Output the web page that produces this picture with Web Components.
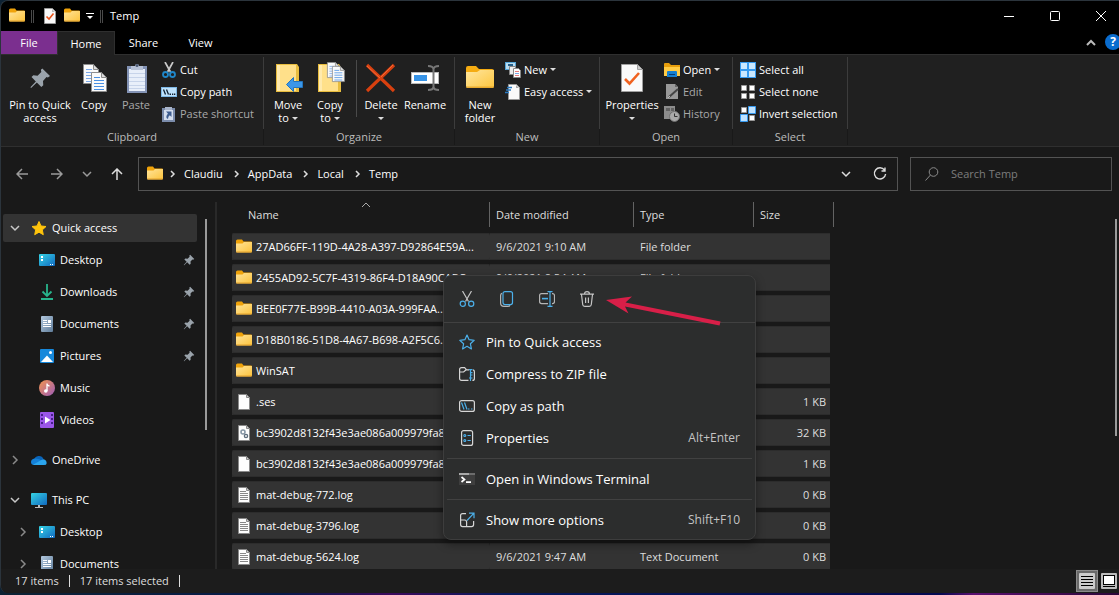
<!DOCTYPE html>
<html lang="en">
<head>
<meta charset="utf-8">
<meta name="viewport" content="width=device-width, initial-scale=1">
<title>Temp</title>
<style>
html, body { margin: 0; height: 100%; background: #0b1030; }
body { font: 11px/14px "Open Sans", "Noto Sans", sans-serif; color: #fff; overflow: hidden; }
</style>
</head>
<body>
<explorer-window></explorer-window>
<script>
const folder = '<path fill="#f0a30a" d="M0 2Q0 .5 1.500.5h4.500l1.500 2H15q1 0 1 1V8H0z"/><path fill="url(#fg)" d="M0 4.500h6.500L8 3h8V12.500q0 1-1 1H1q-1 0-1-1z"/><path fill="#e2a02c" d="M0 12.500h16q0 1-1 1H1q-1 0-1-1z"/><defs><linearGradient id="fg" x1="0" y1="0" x2="1" y2="1"><stop stop-color="#ffe49a"/><stop offset="1" stop-color="#fcc33c"/></linearGradient></defs>';
const sheet = '<path fill="#fdfdfd" stroke="#8a8a8a" d="M2.500.5h8l3 3v12h-11z"/><path fill="#ccc" stroke="#8a8a8a" d="M10.500.5v3h3z"/>';
const pin = '<path fill="#9aa3ab" d="M9.500 1 15 6.500l-1.500 1-1-.3L10 10l.2 3-1.400 1.300L5.600 11 1.500 15 1 14.500 4.900 10.400 1.800 7.200 3.100 5.900l3 .3L8.800 3.500 8.500 2z"/>';
const desktop = '<defs><linearGradient id="dg" x1="0" y1="0" x2="1" y2="1"><stop stop-color="#35d3e4"/><stop offset="1" stop-color="#1169c0"/></linearGradient></defs><rect y="2" width="16" height="12" rx="1" fill="url(#dg)"/><path fill="#fff" d="M2 4h2v2H2zM2 7h2v2H2zM11 12h1v1h-1zM13 12h1v1h-1z"/>';
const docLines = (x, y, c) => `<path fill="#fafafa" stroke="#8d8d8d" d="M${x+.5} ${y+.5}h10l5 5v14h-15z"/><path fill="#ddd" stroke="#8d8d8d" d="M${x+10.5} ${y+.5}v5h5z"/><path stroke="${c}" d="M${x+3} ${y+5.5}h6M${x+3} ${y+8.5}h10M${x+3} ${y+11.5}h10M${x+3} ${y+14.5}h10M${x+3} ${y+17.5}h10"/>`;
const bigFolder = '<path fill="#e8bd3f" d="M4 2h21l2 3v25H4z"/><path fill="#ffe08a" d="M5 3h19v26H5z"/><path fill="#ffeaae" d="M5 3h3v26H5z"/>';

const ICONS = {
  folder: [16, folder],
  pin: [16, pin],
  props: [16, '<path fill="#f8f8f8" stroke="#999" d="M2.500.5h8l3 3v12h-11z"/><path fill="#bbb" d="M10 1v3h3z"/><path fill="none" stroke="#e8541c" stroke-width="1.600" d="m4.500 8.500 2.500 2.500 4.500-5.500"/>'],
  customize: [8, '<path stroke="#fff" d="M0 1.500h8"/><path fill="#fff" d="M1 4h6L4 7z"/>'],
  caret: [6, '<path fill="#ddd" d="M0 1h6L3 4z"/>'],
  copyBig: [32, docLines(5, 2, '#7aa7e8') + docLines(13, 10, '#4a90e2')],
  pasteBig: [32, '<g transform="translate(1 1)"><path fill="#8393b5" d="M6 3h20v27H6z"/><path fill="#e8effa" d="M8 6h16v22H8z"/><path stroke="#c7d4ea" d="M8 10.500h16M8 14.500h16M8 18.500h16M8 22.500h16M8 25.500h16"/><path fill="#b6c1d6" d="M10 3h4q0-2 2-2t2 2h4v4H10z"/><circle cx="16" cy="2.500" r="1.500" fill="#4c5a74"/></g>'],
  cut: [16, '<path stroke="#c9c9c9" stroke-width="1.700" d="M4 0l5.500 10M12 0 6.500 10"/><g fill="none" stroke="#1f86c8" stroke-width="1.800"><circle cx="4.500" cy="12.500" r="2.500"/><circle cx="11.500" cy="12.500" r="2.500"/></g>'],
  copyPath: [16, '<rect x=".5" y="3.500" width="15" height="9" fill="#bfe2fb" stroke="#7fb9e6"/><path stroke="#123" stroke-width="1.300" d="m2.500 5.500 2 5M5.500 5.500l2 5"/><path fill="#123" d="M8.500 9.500H10V11H8.500zM11 9.500h1.300V11H11zM13 9.500h1.300V11H13z"/>'],
  pasteShortcut: [16, '<path fill="#7b8cab" d="M1 2h13v14H1z"/><path fill="#d4deee" d="M3 4h9v10H3z"/><path fill="#a9b5cb" d="M4 1h7v3H4z"/><path fill="#3e5d8f" d="M5 5.500h5.500V11L8.800 9.300Q7 10.500 7 13L5.500 12Q5 9.500 6.900 7.400z"/>'],
  pinBig: [32, '<g transform="translate(5 5) scale(1.400)">' + pin + '</g>'],
  moveTo: [32, bigFolder + '<path fill="#3b96e8" stroke="#2274bd" d="m14.500 22.500 7-7v4h9v6h-9v4z"/>'],
  copyTo: [32, bigFolder + '<g transform="translate(13 0) scale(.8)">' + docLines(0, 0, '#7aa7e8') + '</g><g transform="translate(18 4) scale(.8)">' + docLines(0, 0, '#4a90e2') + '</g>'],
  deleteBig: [32, '<path stroke="#d8400f" stroke-width="3.200" d="M2 3 29 29M29 3 2 29"/><path stroke="#f0693a" stroke-width="1" d="M2 4 15 16M28 3 16 15"/>'],
  renameBig: [32, '<rect x="2.500" y="10.500" width="27" height="11" fill="#fff" stroke="#b9b9b9"/><rect x="5" y="13" width="13" height="6" fill="#3793e6"/><path fill="none" stroke="#777" stroke-width="2" d="M19 4q5 0 5.500 3v18q-.5 3-5.500 3M30 4q-5 0-5.500 3v18q.5 3 5.500 3"/>'],
  folderBig: [32, '<path fill="#f5ac12" d="M2 6q0-2 2-2h8l3 3h13q2 0 2 2v4H2z"/><path fill="url(#nf)" d="M2 10h11l3-2h14v16q0 2-2 2H4q-2 0-2-2z"/><path fill="#e8aa2e" d="M2 24.500h28q0 1.500-2 1.500H4q-2 0-2-1.500z"/><defs><linearGradient id="nf" x1="0" y1="0" x2="1" y2="1"><stop stop-color="#ffe69f"/><stop offset="1" stop-color="#fdc63e"/></linearGradient></defs>'],
  newItem: [16, '<rect x=".5" y=".5" width="10" height="7" fill="#b9dcf0" stroke="#54a4d6"/><path fill="#245d86" d="M3 2h5v2H3z"/><path fill="#eee" stroke="#888" d="M4.500 4.500h6v8h-6z"/><path fill="#fff" stroke="#888" d="M8.500 6.500h5l2 2v7h-7z"/><path stroke="#e67a7a" d="M10 9.500h4M10 13.500h4"/><path stroke="#7aa7e8" d="M10 11.500h4"/>'],
  easyAccess: [16, '<path fill="#fafafa" stroke="#999" d="M3.500.5h8l3 3v12h-11z"/><path fill="#aaa" d="M11 1v3h3z"/><path stroke="#2a7ac0" stroke-width="1.300" d="M2 3.500h5M1 6h5M0 8.500h4"/>'],
  propsBig: [32, '<path fill="#fafafa" stroke="#a0a0a0" d="M5.500 2.500h16l5 5v22h-21z"/><path fill="#ccc" stroke="#a0a0a0" d="M21.500 2.500v5h5z"/><path fill="none" stroke="#f06220" stroke-width="2.600" d="m9 17 4.500 4.500L23 11"/>'],
  openFolder: [16, '<path fill="#e79e0c" d="M0 2q0-1 1-1h4l2 2h9v5H0z"/><path fill="#ffcb45" d="M0 5h16v9H0z"/><path fill="#157fd0" d="M3 10q0-1 1-1h8q1 0 1 1v5H3z"/><path stroke="#0a3d73" d="M5 12.500h6"/>'],
  edit: [16, '<path fill="#999" d="M2 0h9l3 3v12H2z"/><path fill="#666" d="M11 0v3h3z"/><path stroke="#444" stroke-width="2" d="m5 13 9-8"/><path stroke="#bbb" d="m4 14 2-2"/>'],
  history: [16, '<path fill="#8c8c8c" d="M0 0h11v13H0z"/><path fill="#626262" d="M2 2h4v3H2zM7 2h3v3H7z"/><circle cx="10.500" cy="10.500" r="5" fill="#aaa" stroke="#707070"/><path fill="none" stroke="#333" d="M10.500 7.500v3h3"/>'],
  selectAll: [16, '<path fill="#369af0" d="M0 0h16v16H0z"/><path fill="#c9e7ff" d="M1 1h6v6H1zM9 1h6v6H9zM1 9h6v6H1zM9 9h6v6H9z"/>'],
  selectNone: [16, '<g fill="#fff" stroke="#999"><path d="M1.500 1.500h5v5h-5zM9.500 1.500h5v5h-5zM1.500 9.500h5v5h-5zM9.500 9.500h5v5h-5z"/></g>'],
  invert: [16, '<g fill="#fff" stroke="#999"><path d="M1.500 1.500h5v5h-5zM9.500 9.500h5v5h-5z"/></g><g fill="#bfe2ff" stroke="#369af0"><path d="M8.500.5h7v7h-7zM.5 8.500h7v7h-7z"/></g>'],
  minimize: [10, '<path stroke="#fff" d="M0 5.500h10"/>'],
  maximize: [10, '<rect x=".5" y=".5" width="9" height="9" rx="1" fill="none" stroke="#fff"/>'],
  close: [10, '<path stroke="#fff" d="m0 0 10 10M10 0 0 10"/>'],
  collapse: [10, '<path fill="none" stroke="#bbb" stroke-width="2" d="m1 7 4-4 4 4"/>'],
  back: [12, '<path fill="none" stroke="#9a9a9a" stroke-width="1.500" d="M12 6H1M6 1 1 6l5 5"/>'],
  forward: [12, '<path fill="none" stroke="#9a9a9a" stroke-width="1.500" d="M0 6h11M6 1l5 5-5 5"/>'],
  up: [12, '<path fill="none" stroke="#ddd" stroke-width="1.500" d="M6 12V1M1 6l5-5 5 5"/>'],
  chevDown: [10, '<path fill="none" stroke="currentColor" stroke-width="1.500" d="m1 3 4 4 4-4"/>'],
  chevRight: [10, '<path fill="none" stroke="currentColor" stroke-width="1.500" d="m3 1 4 4-4 4"/>'],
  crumb: [8, '<path fill="none" stroke="#ddd" stroke-width="1.500" d="m3 1 3 3-3 3"/>'],
  sortUp: [8, '<path fill="none" stroke="#aaa" d="m0 5 4-4 4 4"/>'],
  refresh: [14, '<path fill="none" stroke="#ddd" stroke-width="1.400" d="M11.500 3A5.600 5.600 0 1 0 12.600 7M12 .5V4H8.500"/>'],
  search: [14, '<circle cx="8.500" cy="5" r="4.300" fill="none" stroke="#8b8b8b"/><path stroke="#8b8b8b" d="M5.500 8 .5 13.500"/>'],
  star: [16, '<path fill="#ffc40c" stroke="#ffc40c" stroke-linejoin="round" d="m8 1.500 2 4.500 5 .5-3.700 3.400 1 4.800L8 12.200l-4.300 2.500 1-4.800L1 6.500 6 6z"/>'],
  desktop: [16, desktop],
  downloads: [16, '<path fill="none" stroke="#28b48c" stroke-width="1.800" d="M8 0v12M3.500 7.500 8 12l4.500-4.500M2 15h12"/>'],
  documents: [16, '<defs><linearGradient id="og" x1="0" y1="0" x2="1" y2="1"><stop stop-color="#b3c9df"/><stop offset="1" stop-color="#5f7c99"/></linearGradient></defs><rect x="2" width="12" height="16" rx="1" fill="url(#og)"/><path fill="#fff" d="M4 4h4v1H4zM4 6h4v1H4zM9 4h3v3H9zM4 8h8v1H4zM4 10h8v1H4z"/>'],
  pictures: [16, '<rect x="1" y="1" width="14" height="14" rx="1" fill="#1688db"/><path fill="#fff" d="m2 14 6-6.500 6 6.500z"/><circle cx="11.500" cy="4.500" r="1.500" fill="#fff"/>'],
  music: [16, '<defs><linearGradient id="mg" x1="0" y1="0" x2="1" y2="1"><stop stop-color="#f3954d"/><stop offset="1" stop-color="#9c5bb8"/></linearGradient></defs><circle cx="8" cy="8" r="8" fill="url(#mg)"/><circle cx="6.800" cy="11" r="1.800" fill="#fff"/><path fill="none" stroke="#fff" stroke-width="1.300" d="M8 11V3.500q0 2 2.500 2.500"/>'],
  videos: [16, '<rect x="1" width="14" height="16" rx="1" fill="#9a55e8"/><path fill="#47208a" d="M2 2h2v2H2zM2 6h2v2H2zM2 10h2v2H2zM12 2h2v2h-2zM12 6h2v2h-2zM12 10h2v2h-2z"/><path fill="#fff" d="m6 4.500 5.500 3.500L6 11.500z"/>'],
  onedrive: [16, '<path fill="#0a64b8" d="M3 8a5 5 0 0 1 9.500-1L9 11z"/><path fill="#1480d8" d="M3.500 6.500Q0 7 0 10t3 3h5l4-3.500q-4-3.500-8.500-3z"/><path fill="#2ba5ee" d="m2 12.800 7-4q4-3 6 0 2 4.200-2 4.200H3z"/>'],
  pc: [16, '<defs><linearGradient id="pg" x1="0" y1="0" x2="1" y2="1"><stop stop-color="#35d3e4"/><stop offset="1" stop-color="#1169c0"/></linearGradient></defs><rect y="1" width="16" height="12" rx="1" fill="url(#pg)"/><path fill="#bbb" d="M7 13h2v2H7zM4 15h8v1H4z"/>'],
  file: [16, sheet],
  dll: [16, sheet + '<circle cx="7" cy="7" r="2" fill="none" stroke="#8797a6" stroke-width="1.600"/><circle cx="10" cy="11" r="1.600" fill="none" stroke="#5d6d7c" stroke-width="1.400"/>'],
  log: [16, sheet + '<path stroke="#888" d="M4 4.500h6M4 6.500h8M4 8.500h8M4 10.500h8M4 12.500h8"/>'],
  mCut: [16, '<path stroke="#c4c4c4" stroke-width="1.200" d="M3.500 0l6 10.500M12.500 0l-6 10.500"/><g fill="none" stroke="#4cb0ea" stroke-width="1.200"><circle cx="3.800" cy="12.800" r="2.600"/><circle cx="12.200" cy="12.800" r="2.600"/></g>'],
  mCopy: [16, '<path fill="none" stroke="#b5b5b5" stroke-width="1.200" d="M3 2.200Q1.600 2.800 1.600 4.500V12q0 3.400 3.400 3.400h4q1.500 0 2-1.200"/><rect x="4" y=".6" width="9.500" height="13" rx="2" fill="none" stroke="#4cb0ea" stroke-width="1.200"/>'],
  mRename: [16, '<path fill="none" stroke="#b5b5b5" stroke-width="1.200" d="M9 2.600H2.600Q.6 2.600.6 4.600v6q0 2 2 2H9M13 2.600h.5q2 0 2 2v6q0 2-2 2H13"/><path stroke="#4cb0ea" stroke-width="1.600" d="M3 7.600h6"/><path fill="none" stroke="#4cb0ea" stroke-width="1.200" d="M11 .6v15M8.500.6h5M8.500 15.400h5"/>'],
  mTrash: [16, '<path fill="none" stroke="#c4c4c4" stroke-width="1.200" d="M1 3.100h14M5.500 3Q5.500.7 8 .7T10.500 3M2.500 3.500l1.200 10q.2 1.900 2 1.900h4.600q1.800 0 2-1.900l1.200-10M6.600 6.500v5.500M9.400 6.500v5.500"/>'],
  mStar: [16, '<path fill="none" stroke="#4cb0ea" stroke-width="1.200" stroke-linejoin="round" d="m8 1 2.100 4.700 5.100.6-3.800 3.500 1 5.100L8 12.300l-4.400 2.600 1-5.100L.8 6.300l5.100-.6z"/>'],
  mZip: [16, '<path fill="none" stroke="#d6d6d6" stroke-width="1.200" d="M9.500 14.400H2.600q-2 0-2-2V3.600q0-2 2-2h3l2 2.200h2.400M.6 6h4l2.500-2.200M14 3.800q1.400.3 1.400 2v6.600q0 2-2 2"/><path stroke="#4cb0ea" stroke-width="1.200" d="M11.500 3v12M10 3.600h3.500M11.500 6.600h2M11.500 9h2M10 12h3.500"/>'],
  mPath: [16, '<rect x=".6" y="2.600" width="14.800" height="10.800" rx="2" fill="none" stroke="#d6d6d6" stroke-width="1.200"/><path stroke="#4cb0ea" stroke-width="1.200" d="m2.500 4.500 2.500 7M5.500 4.500l2.500 7M9 11h1.500M12 11h1.500"/>'],
  mProps: [16, '<rect x="2.600" y=".6" width="11" height="14.800" rx="2" fill="none" stroke="#d6d6d6" stroke-width="1.200"/><g fill="none" stroke="#4cb0ea" stroke-width="1.100"><circle cx="5.800" cy="5.500" r="1"/><circle cx="5.800" cy="10.500" r="1"/><path d="M8.500 5.500h3.300M8.500 10.500h3.300"/></g>'],
  mTerm: [16, '<path fill="#3e3e3e" d="M0 2h16v12H0z"/><path fill="#a8a8a8" d="M0 2h10v2H0z"/><path fill="#6c6c6c" d="M10 2h6v2h-6z"/><path fill="none" stroke="#fff" stroke-width="1.700" d="m2.500 6 3 2.500-3 2.500M7 11.200h5"/>'],
  mMore: [16, '<path fill="none" stroke="#d6d6d6" stroke-width="1.200" d="M7 1.600H3.600q-2 0-2 2v9q0 2 2 2h9q2 0 2-2V9M1.600 8h4q2 0 2 2v4.600"/><path fill="none" stroke="#4cb0ea" stroke-width="1.200" d="M8 8.500 14.500 1.600M10 1.200h5v5"/>'],
  details: [16, '<rect width="16" height="16" rx="1" fill="#ccc"/><path stroke="#000" d="M2 3.500h12M2 6.500h12M2 9.500h12M2 12.500h12"/>'],
  tiles: [16, '<rect width="16" height="16" rx="1" fill="#bbb"/><rect x="2.500" y="2.500" width="11" height="9" fill="#fff" stroke="#000"/><path stroke="#000" d="M2 13.500h12"/>'],
  pointer: [118, '<path fill="#d81f48" d="M0 6 26 2.500 19.500 8.500 114.500 27.500 113.500 31.500 19 12.500 22.500 19.500z"/>', 36]
};

// Registers an element whose shadow root is cloned from a template.
function define(name, css, html, setup) {
  const t = document.createElement('template');
  t.innerHTML = `<style>*,:host{box-sizing:border-box}button,input{font:inherit;color:inherit;background:none;border:0;margin:0;padding:0}a{color:inherit;text-decoration:none}${css}</style>${html}`;
  customElements.define(name, class extends HTMLElement {
    connectedCallback() {
      if (this.shadowRoot) return;
      const root = this.attachShadow({ mode: 'open' });
      root.append(t.content.cloneNode(true));
      if (setup) setup(this, root);
    }
  });
}

define('ui-icon', ':host{display:inline-flex;flex:none}svg{display:block}', '', (el, root) => {
  const [w, body, h = w] = ICONS[el.getAttribute('name')];
  root.innerHTML += `<svg width="${w}" height="${h}" viewBox="0 0 ${w} ${h}" aria-hidden="true">${body}</svg>`;
});

define('title-bar', `
  :host{display:flex;align-items:center;height:30px;padding-left:8px;background:#000}
  .quick{display:flex;align-items:center;gap:6px}
  .rule{width:3px;height:13px;border:solid #4a4a4a;border-width:0 1px}
  h1{font:inherit;margin:0 auto 0 7px}
  .win{width:46px;height:30px;display:flex;align-items:center;justify-content:center}
  .win:last-child{margin-right:-5px}
  button{display:flex}.props{margin-left:2px}`,
  `<div class="quick"><ui-icon name="folder"></ui-icon><i class="rule"></i>
   <button class="props" aria-label="Properties"><ui-icon name="props"></ui-icon></button>
   <button aria-label="New folder"><ui-icon name="folder"></ui-icon></button>
   <button aria-label="Customize"><ui-icon name="customize"></ui-icon></button><i class="rule"></i></div>
   <h1>Temp</h1>
   <button class="win" aria-label="Minimize"><ui-icon name="minimize"></ui-icon></button>
   <button class="win" aria-label="Maximize"><ui-icon name="maximize"></ui-icon></button>
   <button class="win" aria-label="Close"><ui-icon name="close"></ui-icon></button>`);

define('ribbon-tabs', `
  :host{display:flex;height:24px;background:#000;border-bottom:1px solid #2f2f2f}
  nav{display:flex;flex:1}
  button{width:57px;height:23px}
  .file{width:56px;background:#7b2f8f}
  .on{width:58px;height:24px;background:#202020;border:solid #2f2f2f;border-width:1px 1px 0}
  .side{width:auto;display:flex;align-items:center;margin-left:9px}
  .help{width:16px;height:16px;line-height:16px;border-radius:8px;background:#0a6cce;font-size:12px;font-weight:700;margin:3px -2px 0 9px;flex:none;text-align:center}`,
  `<nav><button class="file">File</button><button class="on">Home</button><button>Share</button><button>View</button></nav>
   <button class="side" aria-label="Collapse ribbon"><ui-icon name="collapse"></ui-icon></button>
   <button class="help" aria-label="Help">?</button>`);

define('ribbon-group', `
  :host{display:grid;grid-template-rows:72px 16px;width:var(--w);flex:none;padding-top:2px}
  .row{display:flex;padding-left:var(--pad,4px);border-right:1px solid #3c3c3c}
  .label{color:#bdbdbd;text-align:center;line-height:16px;border-right:1px solid #191919}`,
  '<div class="row"><slot></slot></div><div class="label"></div>',
  (el, root) => root.querySelector('.label').textContent = el.getAttribute('label'));

define('ribbon-big', `
  :host{display:block;flex:none;width:var(--bw,42px)}
  button{width:100%;display:flex;flex-direction:column;align-items:center;padding-top:5px;line-height:13px;white-space:nowrap}
  .ic{display:flex}
  .txt{margin-top:4px}:host([dim]){color:#a9a9a9}`,
  '<button><span class="ic"></span><span class="txt"><slot></slot></span></button>',
  (el, root) => root.querySelector('.ic').innerHTML = `<ui-icon name="${el.getAttribute('icon')}"></ui-icon>`);

define('ribbon-small', `
  :host{display:block}
  button{display:flex;align-items:center;gap:3px;height:22px;white-space:nowrap}
  .ic{display:flex}
  :host([dim]){color:#a9a9a9}`,
  '<button><span class="ic"></span><slot></slot></button>',
  (el, root) => {
    root.querySelector('.ic').innerHTML = `<ui-icon name="${el.getAttribute('icon')}"></ui-icon>`;
    if (el.hasAttribute('menu')) root.querySelector('button').insertAdjacentHTML('beforeend', '<ui-icon name="caret"></ui-icon>');
  });

define('ribbon-panel', `
  :host{display:flex;height:92px;background:#202020;border-bottom:1px solid #2f2f2f}
  .col{margin-left:4px;padding-top:2px}
  .rule{width:1px;margin:3px 3px 12px 5px;background:#4a4a4a}`,
  `<ribbon-group label="Clipboard" style="--w:263px;--pad:6px">
     <ribbon-big icon="pinBig" style="--bw:66px">Pin to Quick<br>access</ribbon-big>
     <ribbon-big icon="copyBig">Copy</ribbon-big>
     <ribbon-big icon="pasteBig" dim>Paste</ribbon-big>
     <div class="col"><ribbon-small icon="cut">Cut</ribbon-small><ribbon-small icon="copyPath">Copy path</ribbon-small><ribbon-small icon="pasteShortcut" dim>Paste shortcut</ribbon-small></div>
   </ribbon-group>
   <ribbon-group label="Organize" style="--w:191px;--pad:3px">
     <ribbon-big icon="moveTo">Move<br>to <ui-icon name="caret"></ui-icon></ribbon-big>
     <ribbon-big icon="copyTo">Copy<br>to <ui-icon name="caret"></ui-icon></ribbon-big>
     <i class="rule"></i>
     <ribbon-big icon="deleteBig">Delete<br><ui-icon name="caret"></ui-icon></ribbon-big>
     <ribbon-big icon="renameBig" style="--bw:46px">Rename</ribbon-big>
   </ribbon-group>
   <ribbon-group label="New" style="--w:145px">
     <ribbon-big icon="folderBig">New<br>folder</ribbon-big>
     <div class="col"><ribbon-small icon="newItem" menu>New</ribbon-small><ribbon-small icon="easyAccess" menu>Easy access</ribbon-small></div>
   </ribbon-group>
   <ribbon-group label="Open" style="--w:133px">
     <ribbon-big icon="propsBig" style="--bw:56px">Properties<br><ui-icon name="caret"></ui-icon></ribbon-big>
     <div class="col"><ribbon-small icon="openFolder" menu>Open</ribbon-small><ribbon-small icon="edit" dim>Edit</ribbon-small><ribbon-small icon="history" dim>History</ribbon-small></div>
   </ribbon-group>
   <ribbon-group label="Select" style="--w:115px;--pad:3px">
     <div class="col"><ribbon-small icon="selectAll">Select all</ribbon-small><ribbon-small icon="selectNone">Select none</ribbon-small><ribbon-small icon="invert">Invert selection</ribbon-small></div>
   </ribbon-group>`);

define('address-bar', `
  :host{display:flex;align-items:center;height:55px;padding:0 7px 2px 15px}
  button{display:flex;justify-content:center;flex:none}
  .nav{display:flex;gap:19px;width:122px;align-items:center;color:#9a9a9a}
  .nav button:nth-child(1){margin-right:4px}
  .box{display:flex;align-items:center;height:34px;border:1px solid #535353}
  .path{flex:1;padding:0 10px 0 8px}
  ol{display:flex;align-items:center;list-style:none;margin:0 0 0 5px;padding:0;flex:1}
  li{display:flex;align-items:center}
  li a{margin:0 9px 0 8px}
  .path button+button{margin-left:22px}
  .find{width:202px;margin-left:12px;padding:0 14px;gap:12px}
  input{flex:1;min-width:0;outline:0}
  input::placeholder{color:#7d7d7d;opacity:1}`,
  `<div class="nav"><button aria-label="Back"><ui-icon name="back"></ui-icon></button><button aria-label="Forward"><ui-icon name="forward"></ui-icon></button>
   <button aria-label="Recent locations"><ui-icon name="chevDown"></ui-icon></button><button aria-label="Up"><ui-icon name="up"></ui-icon></button></div>
   <div class="box path"><ui-icon name="folder"></ui-icon>
   <ol><li><ui-icon name="crumb"></ui-icon><a href="#claudiu">Claudiu</a></li><li><ui-icon name="crumb"></ui-icon><a href="#appdata">AppData</a></li><li><ui-icon name="crumb"></ui-icon><a href="#local">Local</a></li><li><ui-icon name="crumb"></ui-icon><a href="#temp">Temp</a></li></ol>
   <button aria-label="Previous locations" style="color:#ddd"><ui-icon name="chevDown"></ui-icon></button><button aria-label="Refresh"><ui-icon name="refresh"></ui-icon></button></div>
   <label class="box find"><ui-icon name="search"></ui-icon><input type="search" placeholder="Search Temp" aria-label="Search Temp"></label>`);

define('nav-item', `
  :host{display:block;height:32px;padding:2px 0}
  a{display:flex;align-items:center;height:28px;padding:0 2px 0 7px;border-radius:2px}
  :host([sub]) a{padding-left:15px}
  :host([current]) a{background:#333}
  .tw{display:flex;width:10px;height:10px;color:#8a8a8a;margin-right:11px}
  .ic{display:flex}
  .open{color:#c8c8c8}
  .txt{margin:0 auto 0 5px;white-space:nowrap}`,
  '<a><span class="tw"></span><span class="ic"></span><span class="txt"><slot></slot></span></a>',
  (el, root) => {
    const a = root.querySelector('a'), tw = root.querySelector('.tw'), state = el.getAttribute('tree');
    a.href = '#' + el.textContent.trim().toLowerCase().replace(/ /g, '-');
    if (state) { tw.innerHTML = `<ui-icon name="${state === 'open' ? 'chevDown' : 'chevRight'}"></ui-icon>`; tw.classList.toggle('open', state === 'open'); }
    root.querySelector('.ic').innerHTML = `<ui-icon name="${el.getAttribute('icon')}"></ui-icon>`;
    if (el.hasAttribute('pinned')) a.insertAdjacentHTML('beforeend', '<svg width="12" height="12" viewBox="0 0 16 16">' + pin + '</svg>');
  });

define('nav-tree', `
  :host{display:flex;width:216px;flex:none;overflow:hidden;border-right:2px solid #292929}
  nav{width:194px;margin:10px 0 0 2px;flex:none}
  section+section{margin-top:8px}
  .bar{width:2px;height:211px;margin:17px 0 0 8px;background:#9a9a9a}`,
  `<nav aria-label="Folders"><section>
     <nav-item icon="star" tree="open" current>Quick access</nav-item>
     <nav-item icon="desktop" sub pinned>Desktop</nav-item>
     <nav-item icon="downloads" sub pinned>Downloads</nav-item>
     <nav-item icon="documents" sub pinned>Documents</nav-item>
     <nav-item icon="pictures" sub pinned>Pictures</nav-item>
     <nav-item icon="music" sub>Music</nav-item>
     <nav-item icon="videos" sub>Videos</nav-item></section>
   <section><nav-item icon="onedrive" tree="closed">OneDrive</nav-item></section>
   <section><nav-item icon="pc" tree="open">This PC</nav-item>
     <nav-item icon="desktop" sub tree="closed">Desktop</nav-item>
     <nav-item icon="documents" sub tree="closed">Documents</nav-item></section></nav>
   <div class="bar"></div>`);

const FILES = [
  ['folder', '27AD66FF-119D-4A28-A397-D92864E59A...', '9/6/2021 9:10 AM', 'File folder', ''],
  ['folder', '2455AD92-5C7F-4319-86F4-D18A90CABC', '9/6/2021 8:54 AM', 'File folder', ''],
  ['folder', 'BEE0F77E-B99B-4410-A03A-999FAA...', '', '', ''],
  ['folder', 'D18B0186-51D8-4A67-B698-A2F5C6...', '', '', ''],
  ['folder', 'WinSAT', '', '', ''],
  ['file', '.ses', '', '', '1 KB'],
  ['dll', 'bc3902d8132f43e3ae086a009979fa88', '', '', '32 KB'],
  ['file', 'bc3902d8132f43e3ae086a009979fa88', '', '', '1 KB'],
  ['log', 'mat-debug-772.log', '', '', '0 KB'],
  ['log', 'mat-debug-3796.log', '', '', '0 KB'],
  ['log', 'mat-debug-5624.log', '9/6/2021 9:47 AM', 'Text Document', '0 KB']
];

define('file-table', `
  :host{display:block;flex:1;min-width:0;overflow:hidden;padding-left:15px}
  table{width:602px;table-layout:fixed;border-collapse:separate;border-spacing:0}
  th{height:31px;padding:0;text-align:left;font-weight:400;vertical-align:top;color:#dedede}
  th div{height:25px;line-height:25px;padding-left:6px;border-right:1px solid #636363;position:relative}
  th:first-child div{padding-left:16px}
  .sort{position:absolute;left:130px;top:0}
  td{height:31px;padding:0 4px 0 6px;background:#333;border-bottom:4px solid #191919;color:#dedede;white-space:nowrap;overflow:hidden;box-shadow:inset 0 1px #2c2c2c,inset 0 -1px #2c2c2c}
  td:first-child{color:#fff;padding:0 0 0 4px;border-radius:2px}
  td:last-child{text-align:right;border-right:4px solid #191919}
  .n{display:flex;gap:4px;align-items:center}`,
  `<table><colgroup><col style="width:258px"><col style="width:144px"><col style="width:120px"><col style="width:80px"></colgroup>
   <thead><tr><th><div>Name<ui-icon class="sort" name="sortUp"></ui-icon></div></th><th><div>Date modified</div></th><th><div>Type</div></th><th><div>Size</div></th></tr></thead><tbody></tbody></table>`,
  (el, root) => root.querySelector('tbody').innerHTML = FILES.map(([icon, ...c]) =>
    `<tr aria-selected="true"><td><div class="n"><ui-icon name="${icon}"></ui-icon><span>${c[0]}</span></div></td><td>${c[1]}</td><td>${c[2]}</td><td>${c[3]}</td></tr>`).join(''));

define('menu-item', `
  :host{display:block}
  button{display:flex;align-items:center;width:100%;height:32px;padding:0 15px;font-size:13px;text-align:left}
  .ic{display:flex}
  .txt{margin:0 auto 0 11px;white-space:nowrap}kbd{font-family:inherit;font-size:12px;color:#c4c4c4}`,
  '<button role="menuitem"><span class="ic"></span><span class="txt"><slot></slot></span></button>',
  (el, root) => {
    root.querySelector('.ic').innerHTML = `<ui-icon name="${el.getAttribute('icon')}"></ui-icon>`;
    if (el.hasAttribute('keys')) root.querySelector('button').insertAdjacentHTML('beforeend', `<kbd>${el.getAttribute('keys')}</kbd>`);
  });

define('context-menu', `
  :host{display:block;width:313px;padding-bottom:3px;background:#2c2d2d;border:1px solid #3d3d3d;border-radius:8px;box-shadow:0 4px 10px rgba(0,0,0,.4)}
  .top{display:flex;gap:24px;height:47px;align-items:center;padding-left:15px;border-bottom:1px solid #414141;margin-bottom:3px}
  .top button{display:flex}
  hr{border:0;height:1px;background:#414141;margin:4px 3px}
  .point{position:absolute;left:162px;top:18px}`,
  `<div class="top"><button aria-label="Cut"><ui-icon name="mCut"></ui-icon></button><button aria-label="Copy"><ui-icon name="mCopy"></ui-icon></button><button aria-label="Rename"><ui-icon name="mRename"></ui-icon></button><button aria-label="Delete"><ui-icon name="mTrash"></ui-icon></button></div>
   <menu-item icon="mStar">Pin to Quick access</menu-item>
   <menu-item icon="mZip">Compress to ZIP file</menu-item>
   <menu-item icon="mPath">Copy as path</menu-item>
   <menu-item icon="mProps" keys="Alt+Enter">Properties</menu-item>
   <hr><menu-item icon="mTerm">Open in Windows Terminal</menu-item>
   <hr><menu-item icon="mMore" keys="Shift+F10">Show more options</menu-item>
   <ui-icon class="point" name="pointer"></ui-icon>`);

define('status-bar', `
  :host{display:flex;align-items:center;height:24px;padding-left:14px;background:#1c1c1c;color:#dedede}
  span{padding-right:10px;margin-right:10px;border-right:1px solid #ddd;line-height:12px}
  .space{flex:1}
  button{display:flex;padding:3px 2px}
  .on{padding:3px;margin-right:1px;background:#6a6a6a;outline:1px solid #8c8c8c;outline-offset:-1px}`,
  `<span>17 items</span><span>17 items selected</span><div class="space"></div>
   <button class="on" aria-label="Details view"><ui-icon name="details"></ui-icon></button><button aria-label="Large icons"><ui-icon name="tiles"></ui-icon></button>`);

define('explorer-window', `
  :host{display:flex;flex-direction:column;height:100vh;padding-bottom:2px;background:linear-gradient(90deg,#0d2233,#071a4a 25%,#3b0a5c 35%,#071a5a 45%,#050a50 84%,#5a1070 87%,#2c0838)}
  .win{display:flex;flex-direction:column;flex:1;min-height:0;overflow:hidden;background:#191919;border:solid #2b343c;border-width:1px 0 0 1px;border-radius:8px 0 0 8px}
  main{display:flex;flex:1;min-height:0;position:relative}
  context-menu{position:absolute;left:442px;top:73px}
  .bar{width:2px;height:217px;margin:17px 2px 0 0;background:#9a9a9a}`,
  `<div class="win"><title-bar></title-bar><ribbon-tabs></ribbon-tabs><ribbon-panel></ribbon-panel><address-bar></address-bar>
   <main><nav-tree></nav-tree><file-table></file-table><div class="bar"></div><context-menu role="menu"></context-menu></main>
   <status-bar></status-bar></div>`);
</script>
</body>
</html>
